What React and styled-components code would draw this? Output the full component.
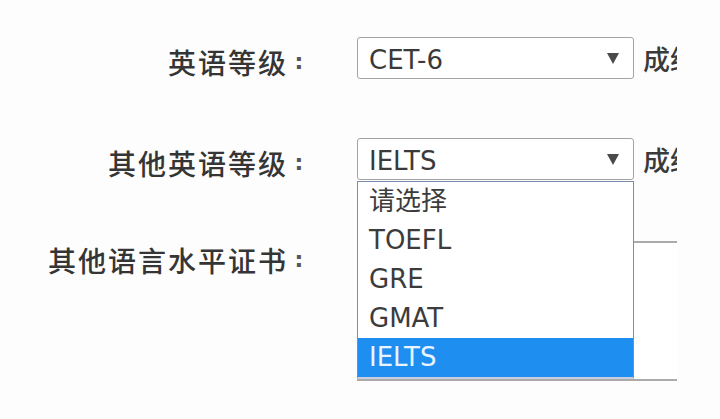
import React from 'react';
import styled, { createGlobalStyle } from 'styled-components';

const GlobalStyle = createGlobalStyle`
  html, body {
    margin: 0;
    padding: 0;
    background: #fdfdfd;
  }
`;

const Page = styled.div`
  width: 677px;
  height: 419px;
  overflow: hidden;
  box-sizing: border-box;
  padding-top: 37px;
  font-family: 'Noto Sans CJK SC', sans-serif;
  color: #353535;
`;

const FormRow = styled.div`
  display: grid;
  grid-template-columns: 310px 1fr;
  column-gap: 47px;
  align-items: start;
  margin-bottom: ${props => props.gap || 0}px;
`;

const Label = styled.div`
  box-sizing: border-box;
  height: ${props => props.h}px;
  padding-top: ${props => props.offset || 0}px;
  display: flex;
  justify-content: flex-end;
  align-items: center;
  font-size: 28px;
  font-weight: 500;
  line-height: 1;
  letter-spacing: 2px;
  white-space: nowrap;
`;

const Colon = styled.span`
  width: 22px;
  text-align: center;
  font-family: 'DejaVu Sans', sans-serif;
  font-weight: bold;
  font-size: 22px;
  letter-spacing: 0;
  color: #555;
`;

const Field = styled.div`
  display: flex;
  align-items: center;
  gap: 9px;
  white-space: nowrap;
`;

const SelectWrap = styled.div`
  position: relative;
  flex: none;
`;

const SelectBox = styled.div`
  box-sizing: border-box;
  width: 277px;
  height: 42px;
  border: 1px solid #a3a3a3;
  border-radius: 3px;
  background: #fff;
  display: flex;
  align-items: center;
  justify-content: space-between;
  padding: 3px 14px 0 11px;
  font-family: 'DejaVu Sans', sans-serif;
  font-size: 26px;
  color: #3a3a3a;
`;

const Arrow = styled.span`
  width: 0;
  height: 0;
  margin-bottom: 3px;
  border-left: 6px solid transparent;
  border-right: 6px solid transparent;
  border-top: 11px solid #4a4a4a;
`;

const Suffix = styled.span`
  font-size: 27px;
  font-weight: 500;
  line-height: 1;
  color: #3a3a3a;
`;

const OptionList = styled.ul`
  position: absolute;
  top: 100%;
  left: 0;
  z-index: 2;
  box-sizing: border-box;
  width: 277px;
  margin: 1px 0 0;
  padding: 0;
  list-style: none;
  background: #fff;
  border: 1px solid #7c8bb0;
  border-bottom-width: 2px;
  border-bottom-color: #c9cfe0;
`;

const Option = styled.li`
  height: 39px;
  line-height: 39px;
  padding-left: 11px;
  font-family: 'DejaVu Sans', 'Noto Sans CJK SC', sans-serif;
  font-size: 26px;
  color: ${props => (props.active ? '#e8f4ff' : '#3c3c3c')};
  background: ${props => (props.active ? '#1e8ff0' : 'transparent')};
`;

const TextArea = styled.div`
  box-sizing: border-box;
  width: 420px;
  height: 140px;
  border: 2px solid #ababab;
  background: #fff;
`;

const options = ['请选择', 'TOEFL', 'GRE', 'GMAT', 'IELTS'];

const App = () => (
  <>
    <GlobalStyle />
    <Page>
      <FormRow gap={59}>
        <Label h={42} offset={8}>
          英语等级<Colon>:</Colon>
        </Label>
        <Field>
          <SelectWrap>
            <SelectBox>
              CET-6
              <Arrow />
            </SelectBox>
          </SelectWrap>
          <Suffix>成绩</Suffix>
        </Field>
      </FormRow>

      <FormRow gap={61}>
        <Label h={42} offset={8}>
          其他英语等级<Colon>:</Colon>
        </Label>
        <Field>
          <SelectWrap>
            <SelectBox>
              IELTS
              <Arrow />
            </SelectBox>
            <OptionList>
              {options.map(opt => (
                <Option key={opt} active={opt === 'IELTS'}>
                  {opt}
                </Option>
              ))}
            </OptionList>
          </SelectWrap>
          <Suffix>成绩</Suffix>
        </Field>
      </FormRow>

      <FormRow>
        <Label h={38}>
          其他语言水平证书<Colon>:</Colon>
        </Label>
        <TextArea />
      </FormRow>
    </Page>
  </>
);

export default App;
